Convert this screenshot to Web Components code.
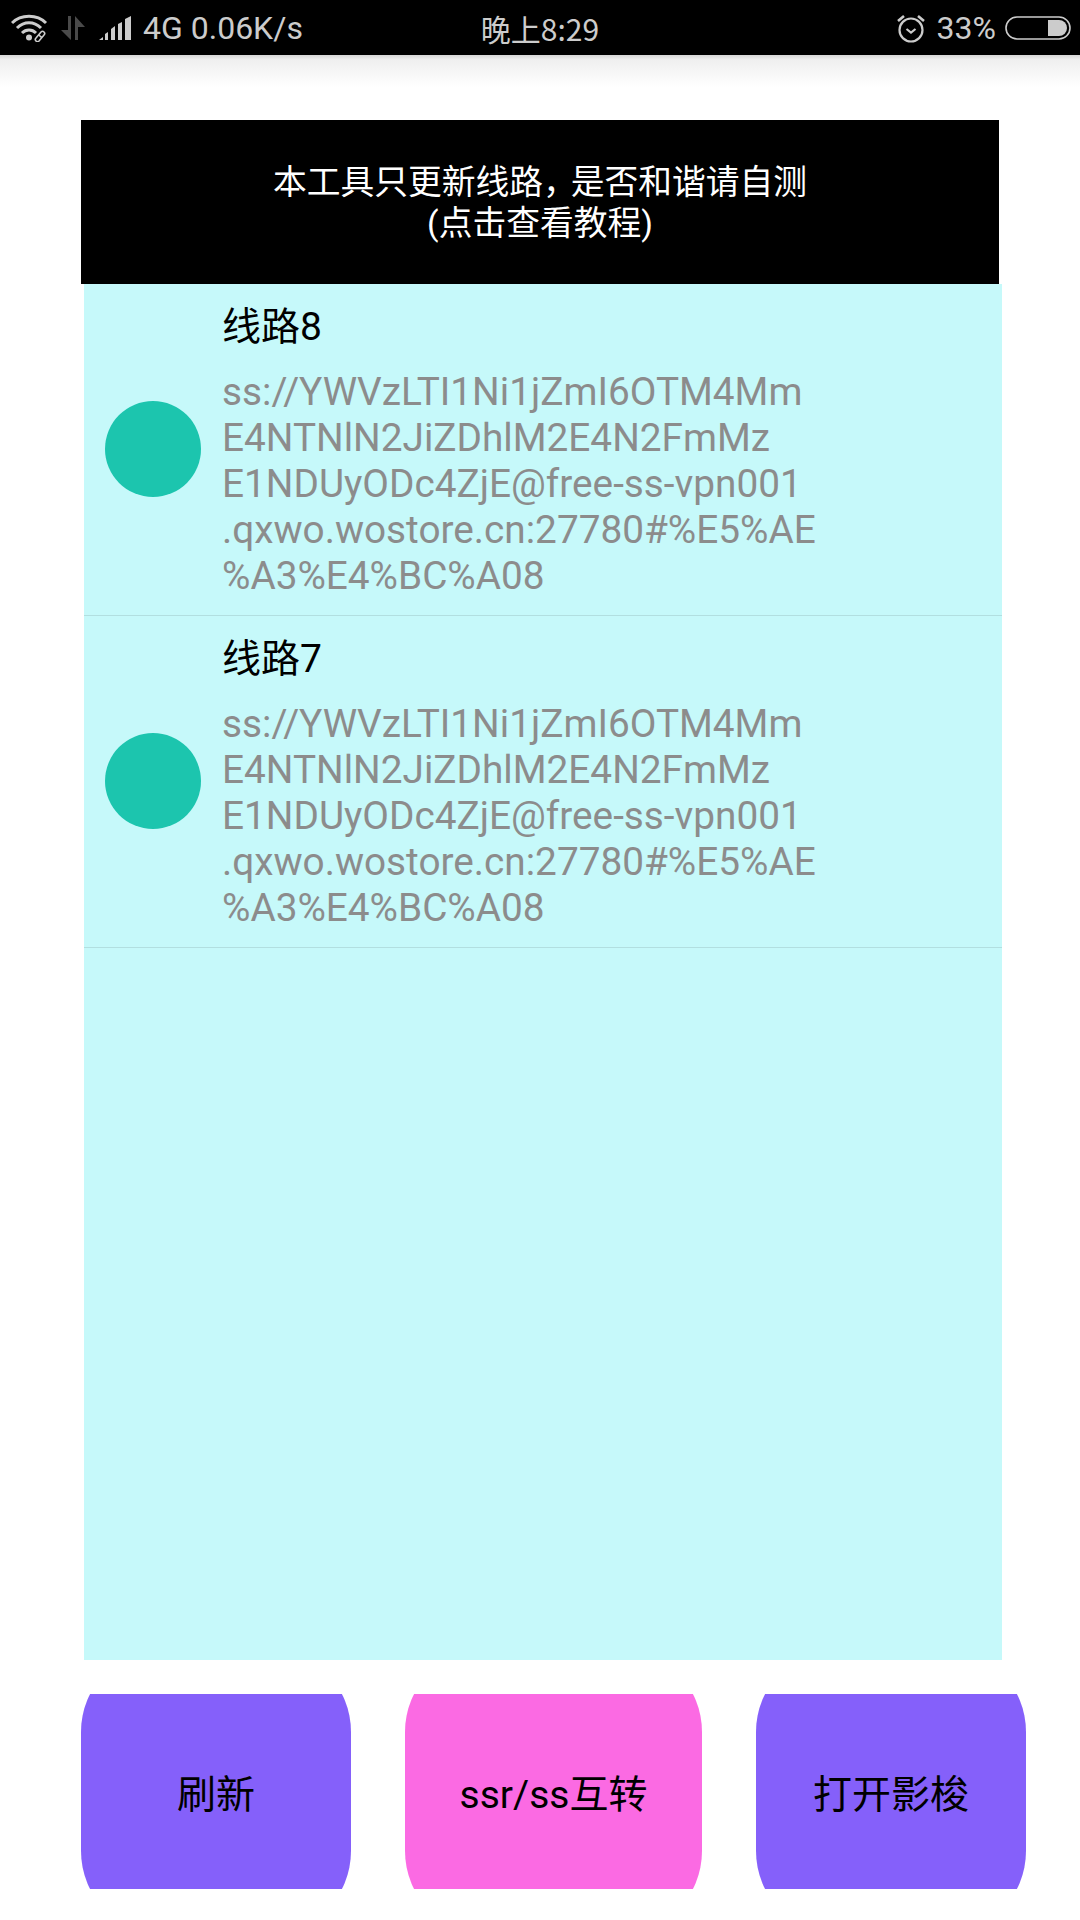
<!DOCTYPE html>
<html lang="zh">
<head>
<meta charset="utf-8">
<title>线路</title>
<style>
  html, body { margin: 0; padding: 0; background: #fff; }
  body { width: 1080px; height: 1920px; overflow: hidden; font-family: Roboto, "Noto Sans CJK SC", sans-serif; }
  .coma { letter-spacing: -6px; }
</style>
</head>
<body>
<status-bar></status-bar>
<main-screen>
  <notice-banner>本工具只更新线路<span class="coma">，</span>是否和谐请自测<br>(点击查看教程)</notice-banner>
  <route-list>
    <route-item titulo="线路8">ss://YWVzLTI1Ni1jZmI6OTM4Mm<br>E4NTNlN2JiZDhlM2E4N2FmMz<br>E1NDUyODc4ZjE@free-ss-vpn001<br>.qxwo.wostore.cn:27780#%E5%AE<br>%A3%E4%BC%A08</route-item>
    <route-item titulo="线路7">ss://YWVzLTI1Ni1jZmI6OTM4Mm<br>E4NTNlN2JiZDhlM2E4N2FmMz<br>E1NDUyODc4ZjE@free-ss-vpn001<br>.qxwo.wostore.cn:27780#%E5%AE<br>%A3%E4%BC%A08</route-item>
  </route-list>
  <action-bar>
    <action-button color="#8560fa" style="width:270px">刷新</action-button>
    <action-button color="#fb6ae3" style="width:297px">ssr/ss互转</action-button>
    <action-button color="#8560fa" style="width:270px">打开影梭</action-button>
  </action-bar>
</main-screen>

<script>
// ===== STATUS BAR =====
class StatusBar extends HTMLElement {
  connectedCallback() {
    this.attachShadow({ mode: "open" }).innerHTML = `
      <style>
        :host { display: block; position: relative; height: 55px; background: #000; color: #ccc;
                font: 400 32px/55px Roboto, "Noto Sans CJK SC", sans-serif; }
        /* shadow under the bar */
        :host::after { content: ""; position: absolute; left: 0; right: 0; top: 100%; height: 32px;
                       background: linear-gradient(#d6d6d6, #efefef 15%, #fff); }
        .bar { display: grid; grid-template-columns: 1fr auto 1fr; height: 100%; align-items: center; }
        .left { display: flex; align-items: center; padding-left: 11px; }
        .right { display: flex; align-items: center; justify-content: flex-end; padding-right: 9px; }
        svg { display: block; flex: none; }
        .net { margin-left: 10px; padding-top: 1px; }
        .clock { font-size: 30px; font-family: "Noto Sans CJK SC", Roboto, sans-serif; }
        .batt { margin-left: 9px; }
        .pct { margin-left: 11px; padding-top: 1px; }
      </style>
      <div class="bar">
        <div class="left">
          <svg width="38" height="28" viewBox="0 0 38 28" fill="none" stroke="#ccc" stroke-width="3">
            <path d="M1 9C10 0 26 0 35 9"/>
            <path d="M6 14C13 7 23 7 30 14"/>
            <path d="M11 19C15 15 21 15 25 19"/>
            <circle cx="18" cy="23.5" r="3" fill="#ccc" stroke="none"/>
            <path stroke-width="1.6" d="M25 24l5-6c2-2 5 1 3 3l-5 6c-2 2-5-1-3-3zM28 21l3 3"/>
          </svg>
          <svg style="margin-left:11px" width="26" height="26" viewBox="0 0 26 26" fill="#4a4a4a">
            <path d="M8 1h3v24L1 15h7z"/>
            <path d="M15 1l10 11h-7v13h-3z"/>
          </svg>
          <svg style="margin-left:13px" width="34" height="24" viewBox="0 0 34 24" fill="#ccc">
            <path d="M0 24l4-3v3zM6 24v-6l3-2v8zM12 24V13l4-3v14zM19 24V8l4-2v18zM26 24V3l6-3v24z"/>
          </svg>
          <span class="net">4G 0.06K/s</span>
        </div>
        <div class="clock">晚上8:29</div>
        <div class="right">
          <svg width="30" height="30" viewBox="0 0 30 30" fill="none" stroke="#ccc" stroke-width="2.2">
            <circle cx="15" cy="17" r="11.5"/>
            <path d="M10.5 16l4.5 3.5 4.5-3.5"/>
            <path stroke-width="2.6" d="M2 8l6-5M28 8l-6-5"/>
          </svg>
          <span class="pct">33%</span>
          <svg class="batt" width="66" height="24" viewBox="0 0 66 24">
            <rect x="1" y="1" width="64" height="22" rx="11" fill="none" stroke="#ccc" stroke-width="1.6"/>
            <path d="M43 4h11a8 8 0 0 1 0 16H43z" fill="#ccc"/>
          </svg>
        </div>
      </div>`;
  }
}

// ===== LAYOUT =====
class MainScreen extends HTMLElement {
  connectedCallback() {
    this.attachShadow({ mode: "open" }).innerHTML = `
      <style>
        :host { display: flex; flex-direction: column; padding: 65px 0 0 81px; }
      </style>
      <slot></slot>`;
  }
}

// ===== NOTICE =====
class NoticeBanner extends HTMLElement {
  connectedCallback() {
    this.attachShadow({ mode: "open" }).innerHTML = `
      <style>
        :host { display: flex; align-items: center; justify-content: center; box-sizing: border-box;
                width: 918px; height: 164px; padding-top: 3px;
                background: #000; color: #fff; text-align: center;
                font: 400 33.75px/40.4px Roboto, "Noto Sans CJK SC", sans-serif; }
      </style>
      <div><slot></slot></div>`;
  }
}

// ===== ROUTES =====
class RouteList extends HTMLElement {
  connectedCallback() {
    this.attachShadow({ mode: "open" }).innerHTML = `
      <style>
        :host { display: block; width: 918px; height: 1376px; margin-left: 3px; background: #c6f9fa; }
      </style>
      <slot></slot>`;
  }
}

class RouteItem extends HTMLElement {
  connectedCallback() {
    this.attachShadow({ mode: "open" }).innerHTML = `
      <style>
        :host { display: flex; align-items: center; height: 332px; box-sizing: border-box;
                border-bottom: 1.5px solid #b2dfe0; }
        .dot { flex: none; width: 96px; height: 96px; margin: -2px 21px 0 21px; border-radius: 50%; background: #1cc5ae; }
        .texts { display: flex; flex-direction: column; }
        .name { font: 400 39px/54px Roboto, "Noto Sans CJK SC", sans-serif; color: #000; margin-bottom: 15px; }
        .desc { font: 400 38.75px/46px Roboto, "Noto Sans CJK SC", sans-serif; color: #8c8c8c; white-space: nowrap; }
      </style>
      <div class="dot"></div>
      <div class="texts">
        <div class="name"></div>
        <div class="desc"><slot></slot></div>
      </div>`;
    this.shadowRoot.querySelector(".name").textContent = this.getAttribute("titulo") || "";
  }
}

// ===== BUTTONS =====
class ActionBar extends HTMLElement {
  connectedCallback() {
    this.attachShadow({ mode: "open" }).innerHTML = `
      <style>
        :host { display: flex; gap: 54px; margin-top: 34px; }
      </style>
      <slot></slot>`;
  }
}

class ActionButton extends HTMLElement {
  connectedCallback() {
    this.attachShadow({ mode: "open" }).innerHTML = `
      <style>
        :host { display: flex; align-items: center; justify-content: center; position: relative; overflow: hidden;
                box-sizing: border-box; height: 195px; padding-top: 7px; color: #000;
                font: 400 39px/1 Roboto, "Noto Sans CJK SC", sans-serif; }
        /* the drawable is taller than the view, its rounded corners get cut at top and bottom */
        .fondo { position: absolute; inset: -46px 0; border-radius: 84px; background: var(--btn-color); }
        .label { position: relative; }
      </style>
      <div class="fondo"></div>
      <div class="label"><slot></slot></div>`;
    this.style.setProperty("--btn-color", this.getAttribute("color"));
  }
}

customElements.define("status-bar", StatusBar);
customElements.define("main-screen", MainScreen);
customElements.define("notice-banner", NoticeBanner);
customElements.define("route-list", RouteList);
customElements.define("route-item", RouteItem);
customElements.define("action-bar", ActionBar);
customElements.define("action-button", ActionButton);
</script>
</body>
</html>
